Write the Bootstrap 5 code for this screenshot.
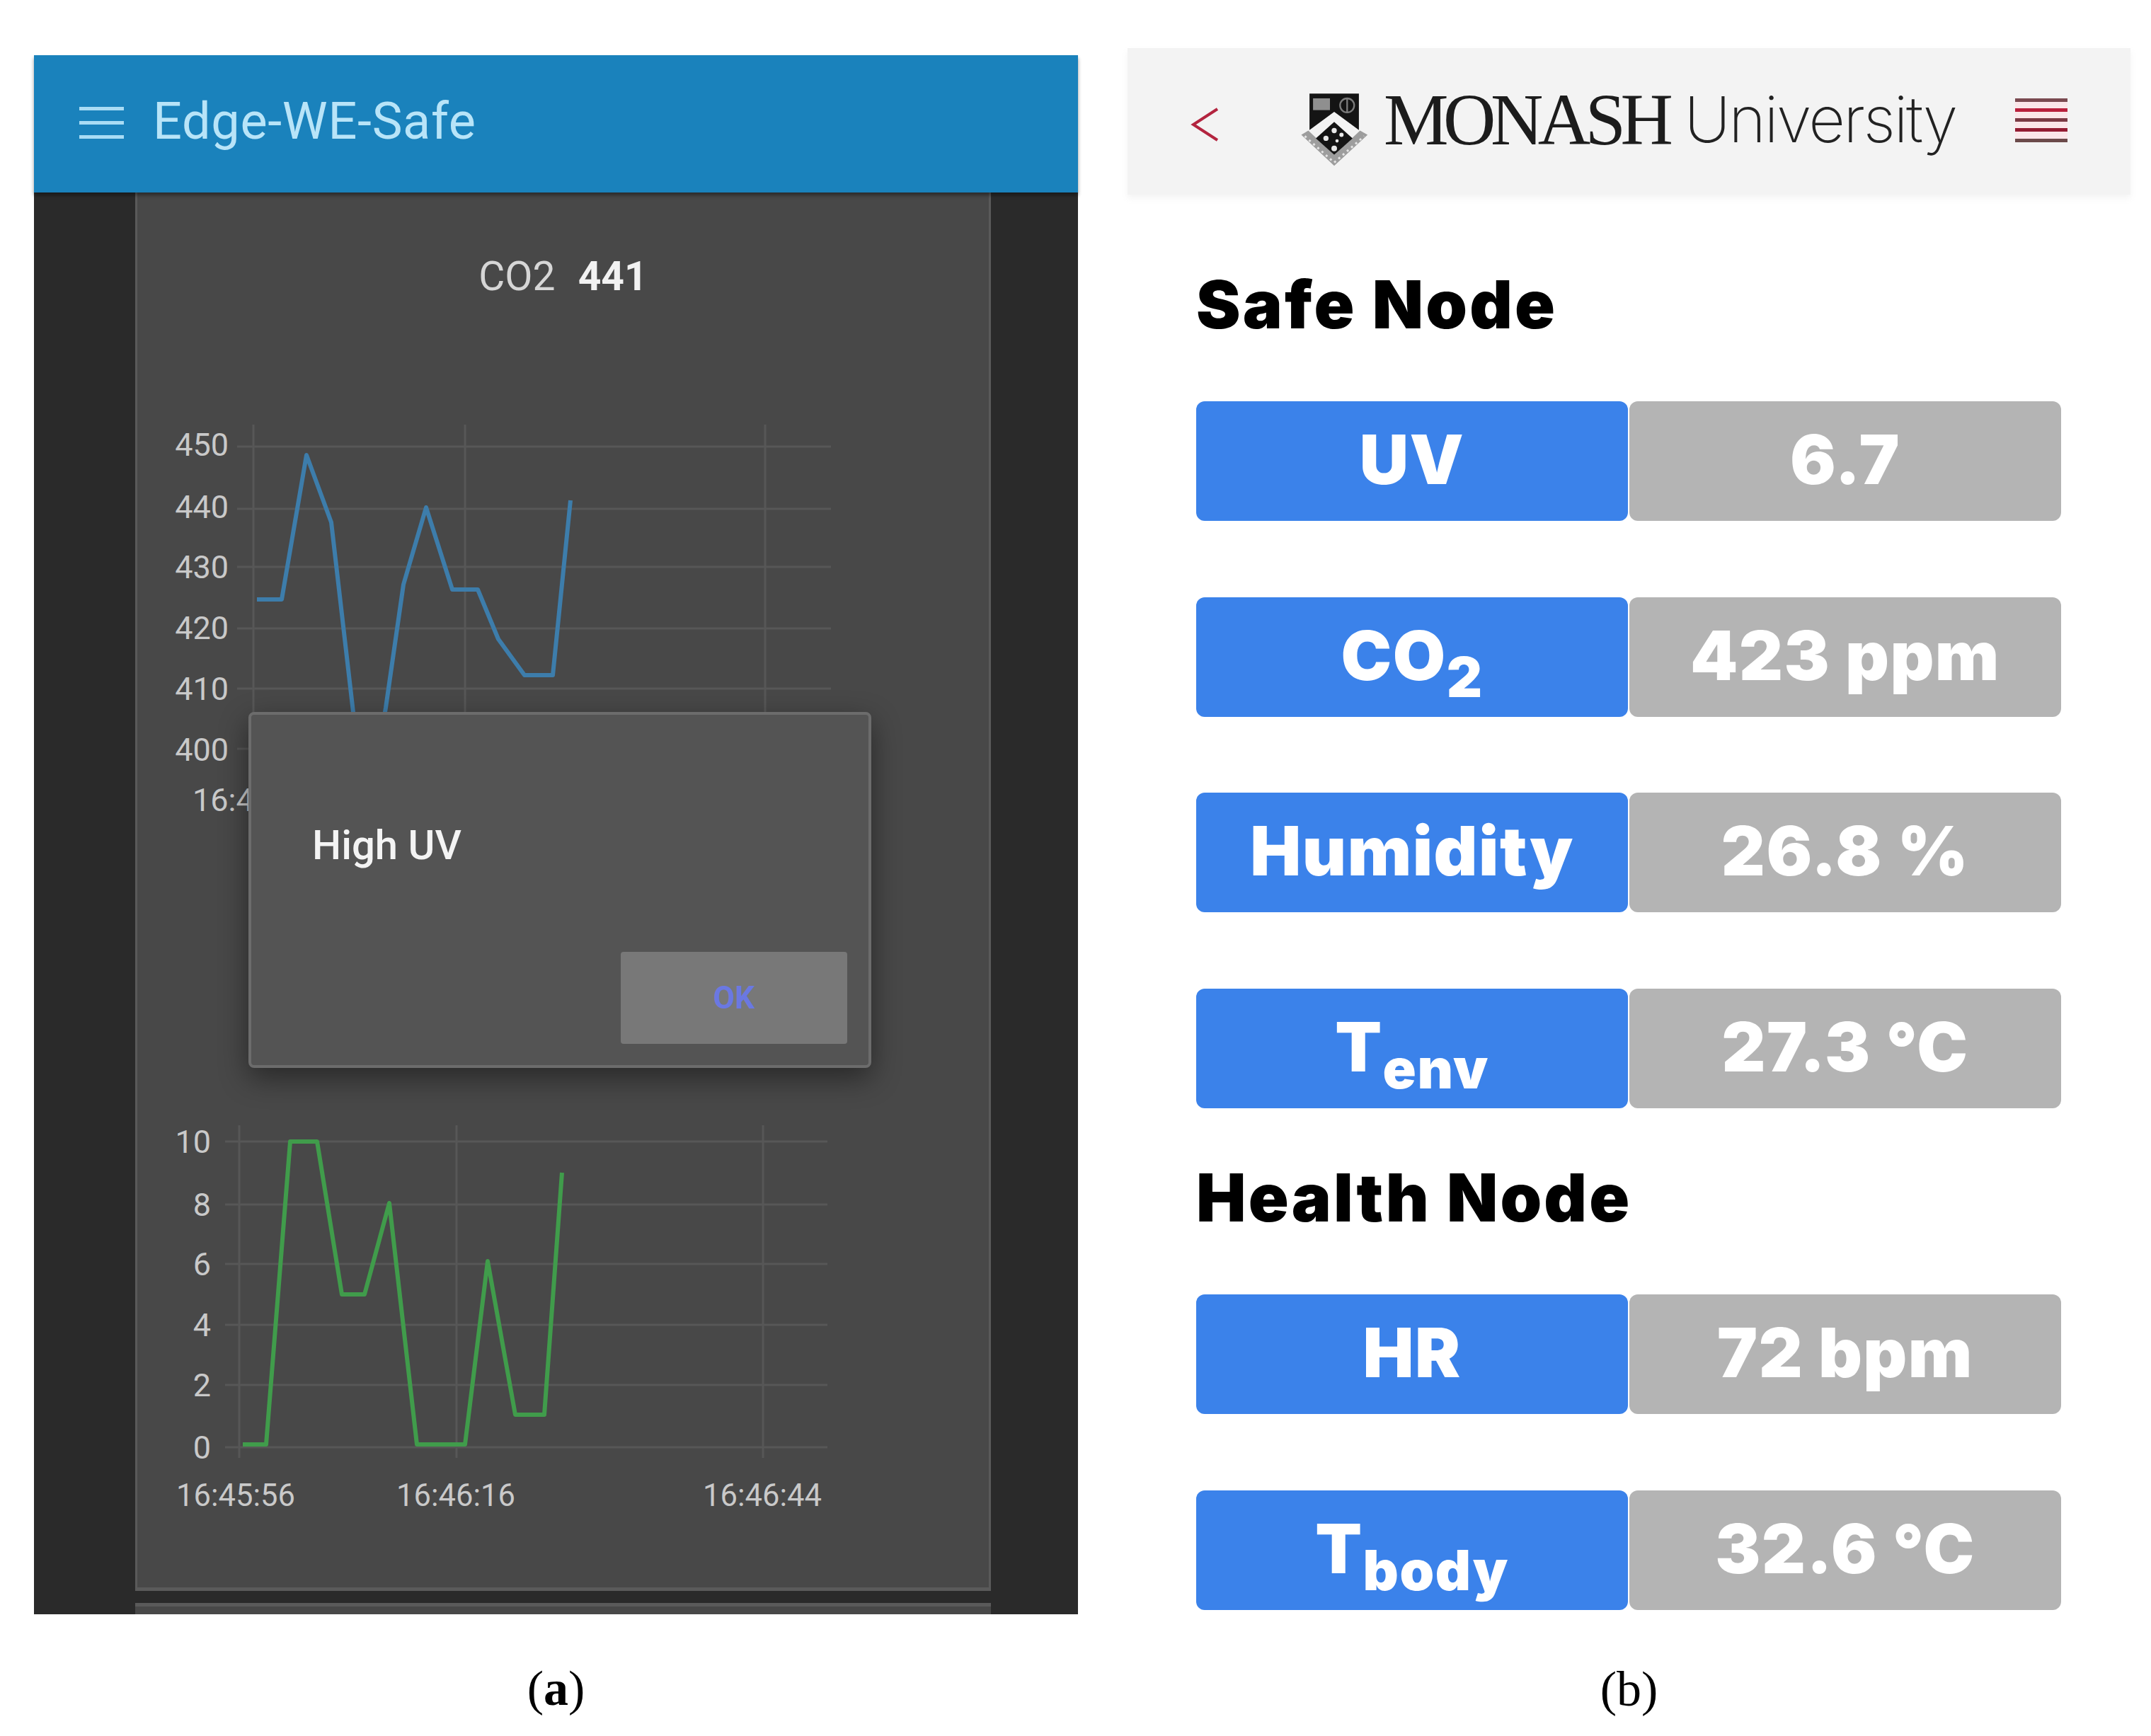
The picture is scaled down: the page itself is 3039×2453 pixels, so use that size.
<!DOCTYPE html>
<html lang="en">
<head>
<meta charset="utf-8">
<title>Edge-WE-Safe and Monash University dashboards</title>
<link rel="stylesheet" href="https://cdn.jsdelivr.net/npm/bootstrap@5.3.0/dist/css/bootstrap.min.css">
<style>
html,body{background:#fff;margin:0}
.fig-page{width:3039px;height:2453px;overflow:hidden}
.fig-a{width:1475px;margin:78px 0 0 48px;flex:none}
.fig-b{width:1417px;margin:68px 0 0 70px;flex:none}
.fig-caption{font-family:"Liberation Serif",serif;font-size:70px;line-height:80px;color:#000;text-align:center}
.fig-a .fig-caption{margin-top:65px}
.fig-b .fig-caption{margin-top:72px}
.app-bar{height:194px;background:#1a82bc;padding-left:64px;gap:41px;box-shadow:0 4px 5px rgba(0,0,0,.4);position:relative;z-index:2}
.app-burger{width:63px;gap:15px;margin-bottom:4px}
.app-burger span{height:5px;background:#a9dcf5;display:block}
.app-title{font-family:Roboto,sans-serif;font-size:72px;line-height:90px;letter-spacing:.7px;color:#b8e4f8;white-space:nowrap;margin-bottom:6px}
.app-body{height:2009px;background:#2a2a2a;padding:0 123px 0 143px;overflow:hidden;gap:17px}
.dash-card{background:#484848;border:solid #5a5a5a;border-width:0 3px 5px 3px;height:1976px;position:relative;flex:none}
.dash-card-next{background:#484848;border-top:5px solid #5a5a5a;height:40px;flex:none}
.dash-head{padding-top:85px;height:318px;font-family:Roboto,sans-serif;font-size:57px;line-height:68px;color:#d6d6d6;gap:32px}
.dash-head b{color:#f2f2f2;font-weight:700}
.chart-one{display:block;width:1203px;height:580px;margin-bottom:410px}
.chart-two{display:block;width:1203px;height:575px}
.chart-label{font-family:Roboto,sans-serif;font-size:45px;fill:#c9c9c9}
.chart-time{font-size:43.5px}
.alert-box{position:absolute;left:157px;top:734px;width:880px;height:503px;background:#545454;border:4px solid #6c6c6c;border-radius:8px;box-shadow:0 14px 40px rgba(0,0,0,.45);padding:0 30px 30px 86px}
.alert-text{font-family:Roboto,sans-serif;font-weight:500;font-size:58px;line-height:70px;color:#f4f4f4;margin-top:149px}
.alert-ok{width:320px;height:130px;background:#787878;border:0;border-radius:4px;font-family:Roboto,sans-serif;font-weight:700;font-size:44px;color:#6a78e2;padding:0}
.uni-bar{height:207px;background:#f3f3f3;box-shadow:0 5px 8px rgba(243,243,243,.9);padding:0 89px 0 89px}
.uni-back{width:41px;height:50px;display:block;margin-top:8px}
.uni-brand{margin-left:112px;width:940px}
.uni-crest{width:100px;height:108px;display:block;margin-top:22px;flex:none}
.uni-monash{font-family:"Liberation Serif",serif;font-size:103px;line-height:110px;letter-spacing:-7.5px;color:#1c1c1c;margin-left:20px;margin-bottom:6px}
.uni-name{font-family:Inter,sans-serif;font-weight:200;font-size:90px;line-height:110px;letter-spacing:-2.6px;color:#222;margin-left:23px;margin-bottom:6px}
.uni-menu{width:74px;height:62px;background:#fbe6e9;margin-bottom:4px}
.uni-menu span{height:5px;display:block}
.node-wrap{padding:0 98px 0 97px}
.node-title{font-family:Inter,sans-serif;font-weight:900;font-size:94px;line-height:100px;color:#000;letter-spacing:3.2px;margin:0;white-space:nowrap}
.node-title-safe{margin-top:105px;margin-bottom:87px}
.node-title-health{margin-top:76px;margin-bottom:87.5px}
.node-row{height:169px;gap:2px;margin-bottom:107.5px;font-family:Inter,sans-serif;font-weight:900;color:#fff;font-size:96px;line-height:1;letter-spacing:1.5px}
.node-row-tight{margin-bottom:0}
.node-key,.node-val{width:50%;border-radius:12px;white-space:nowrap;padding-bottom:5px}
.node-key{background:#3b82ea}
.node-val{background:#b4b4b4}
.node-key sub{font-size:78px;vertical-align:-24px;line-height:0;bottom:auto}
</style>
</head>
<body>
<div class="fig-page d-flex align-items-start">

  <div class="fig-a">
    <div class="app-bar d-flex align-items-center">
      <div class="app-burger d-flex flex-column"><span></span><span></span><span></span></div>
      <div class="app-title">Edge-WE-Safe</div>
    </div>
    <div class="app-body d-flex flex-column">
      <div class="dash-card">
        <div class="dash-head d-flex justify-content-center"><span>CO2</span><b>441</b></div>
        <svg class="chart-one" viewBox="194 590 1203 580" role="img" aria-label="CO2 chart">
          <g stroke="#575757" stroke-width="3" fill="none">
            <path d="M335 631H1174M335 719H1174M335 801H1174M335 888H1174M335 973H1174M335 1058H1174"/>
            <path d="M358 600V1060M657 600V1060M1081 600V1060"/>
          </g>
          <polyline points="363,847 398,847 433,643 468,738 500,1015 510,1060 535,1060 545,1000 570,826 602,717 639,833 675,833 704,903 741,954 781,954 806,707" fill="none" stroke="#3d7dab" stroke-width="6" stroke-linejoin="round"/>
          <g class="chart-label" text-anchor="end">
            <text x="323" y="644">450</text>
            <text x="323" y="732">440</text>
            <text x="323" y="817">430</text>
            <text x="323" y="903">420</text>
            <text x="323" y="989">410</text>
            <text x="323" y="1075">400</text>
          </g>
          <text class="chart-label" x="272" y="1146">16:4</text>
        </svg>
        <svg class="chart-two" viewBox="194 1580 1203 575" role="img" aria-label="UV chart">
          <g stroke="#575757" stroke-width="3" fill="none">
            <path d="M318 1613H1169M318 1702H1169M318 1786H1169M318 1872H1169M318 1957H1169M318 2045H1169"/>
            <path d="M338 1590V2060M645 1590V2060M1078 1590V2060"/>
          </g>
          <polyline points="343,2041 376,2041 410,1613 448,1613 483,1829 515,1829 550,1700 589,2041 657,2041 689,1782 728,1999 769,1999 794,1657" fill="none" stroke="#409c4b" stroke-width="6" stroke-linejoin="round"/>
          <g class="chart-label" text-anchor="end">
            <text x="298" y="1629">10</text>
            <text x="298" y="1718">8</text>
            <text x="298" y="1802">6</text>
            <text x="298" y="1888">4</text>
            <text x="298" y="1973">2</text>
            <text x="298" y="2061">0</text>
          </g>
          <g class="chart-label chart-time" text-anchor="middle">
            <text x="333" y="2128">16:45:56</text>
            <text x="644" y="2128">16:46:16</text>
            <text x="1077" y="2128">16:46:44</text>
          </g>
        </svg>
        <div class="alert-box d-flex flex-column justify-content-between">
          <div class="alert-text">High UV</div>
          <div class="d-flex justify-content-end"><button type="button" class="alert-ok">OK</button></div>
        </div>
      </div>
      <div class="dash-card-next"></div>
    </div>
    <div class="fig-caption">(<b>a</b>)</div>
  </div>

  <div class="fig-b">
    <div class="uni-bar d-flex align-items-center">
      <svg class="uni-back" viewBox="0 0 41 50" aria-hidden="true"><path d="M38 3 4 25 38 47" fill="none" stroke="#b3243f" stroke-width="4"/></svg>
      <div class="uni-brand d-flex align-items-center">
        <svg class="uni-crest" viewBox="110 85 300 325" aria-hidden="true">
          <path d="M120 270 150 252 185 285 260 355 335 285 370 252 402 270 260 402Z" fill="#9d9d9d"/>
          <path d="M135 276 260 388 387 276" fill="none" stroke="#e4e4e4" stroke-width="9" stroke-dasharray="9 15"/>
          <path d="M155 95H365V250L260 172 155 250Z" fill="#141414"/>
          <path d="M260 178 345 250 335 275 260 215 185 275 172 250Z" fill="#f3f3f3"/>
          <path d="M260 215 338 285 260 355 182 285Z" fill="#141414"/>
          <rect x="170" y="115" width="72" height="50" fill="#8f8f8f"/>
          <circle cx="315" cy="145" r="30" fill="none" stroke="#7b7b7b" stroke-width="7"/>
          <path d="M315 115V175" stroke="#7b7b7b" stroke-width="7"/>
          <g fill="#e8e8e8"><circle cx="260" cy="252" r="11"/><circle cx="225" cy="285" r="11"/><circle cx="291" cy="270" r="9"/><circle cx="272" cy="296" r="7"/><circle cx="260" cy="328" r="12"/></g>
        </svg>
        <span class="uni-monash">MONASH</span><span class="uni-name">University</span>
      </div>
      <div class="uni-menu d-flex flex-column justify-content-between ms-auto">
        <span style="background:#7a4a50"></span><span style="background:#b8203c"></span><span style="background:#7a3a44"></span><span style="background:#931c32"></span><span style="background:#6b4a4a"></span>
      </div>
    </div>
    <div class="node-wrap">
      <h2 class="node-title node-title-safe">Safe Node</h2>
      <div class="node-row d-flex"><div class="node-key d-flex align-items-center justify-content-center"><span>UV</span></div><div class="node-val d-flex align-items-center justify-content-center"><span>6.7</span></div></div>
      <div class="node-row d-flex"><div class="node-key d-flex align-items-center justify-content-center"><span>CO<sub>2</sub></span></div><div class="node-val d-flex align-items-center justify-content-center"><span>423 ppm</span></div></div>
      <div class="node-row d-flex"><div class="node-key d-flex align-items-center justify-content-center"><span>Humidity</span></div><div class="node-val d-flex align-items-center justify-content-center"><span>26.8 %</span></div></div>
      <div class="node-row node-row-tight d-flex"><div class="node-key d-flex align-items-center justify-content-center"><span>T<sub>env</sub></span></div><div class="node-val d-flex align-items-center justify-content-center"><span>27.3 °C</span></div></div>
      <h2 class="node-title node-title-health">Health Node</h2>
      <div class="node-row d-flex"><div class="node-key d-flex align-items-center justify-content-center"><span>HR</span></div><div class="node-val d-flex align-items-center justify-content-center"><span>72 bpm</span></div></div>
      <div class="node-row node-row-tight d-flex"><div class="node-key d-flex align-items-center justify-content-center"><span>T<sub>body</sub></span></div><div class="node-val d-flex align-items-center justify-content-center"><span>32.6 °C</span></div></div>
    </div>
    <div class="fig-caption">(b)</div>
  </div>

</div>
<script src="https://cdn.jsdelivr.net/npm/bootstrap@5.3.0/dist/js/bootstrap.bundle.min.js"></script>
</body>
</html>
